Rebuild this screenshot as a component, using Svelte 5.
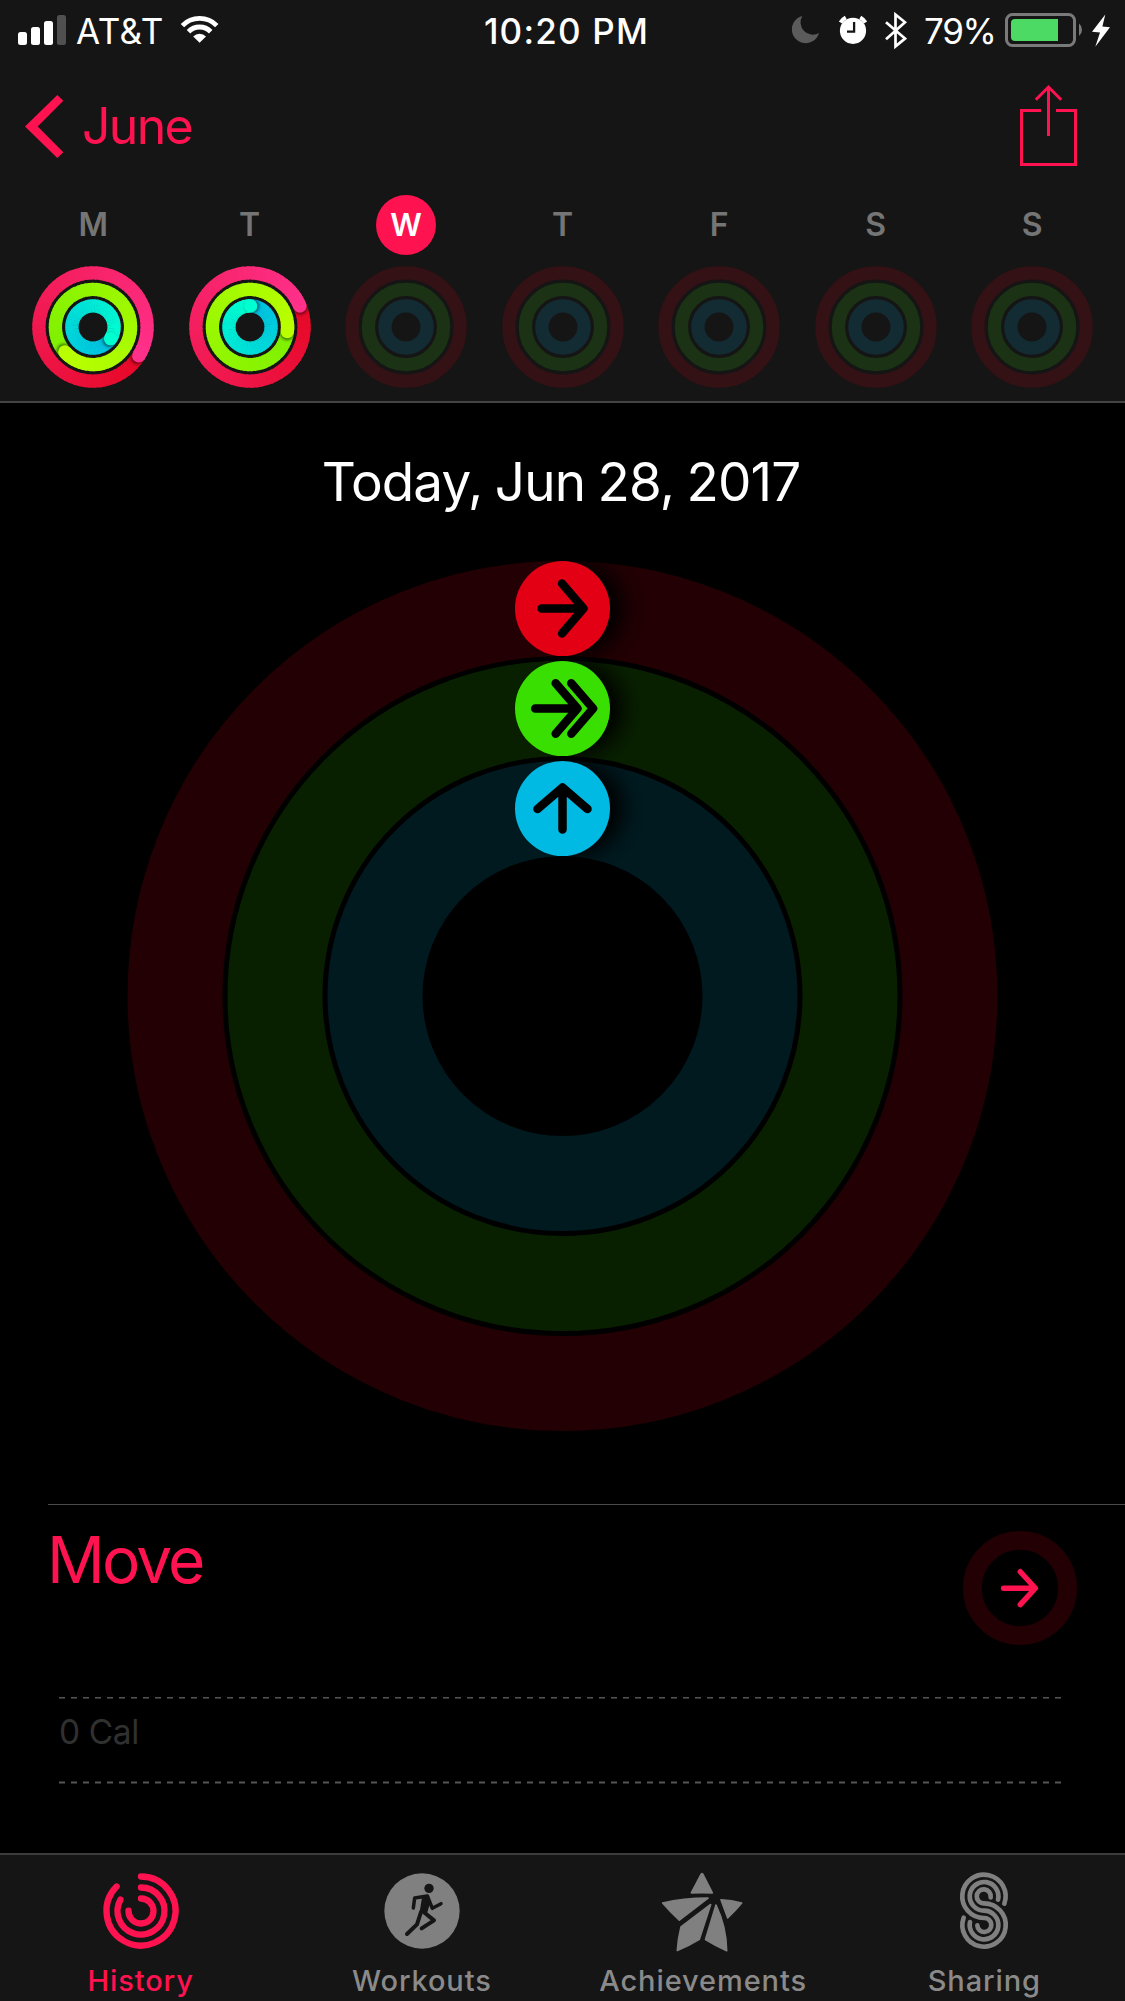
<script>
	const ringColors = [
		{r: 54.1, from: [230, 8, 38], to: [255, 48, 138]},
		{r: 37.6, from: [125, 240, 0], to: [186, 255, 0]},
		{r: 21.1, from: [0, 190, 226], to: [0, 255, 208]}
	]

	// ends: angle in degrees, clockwise from 12 o'clock, where each ring stops
	const days = [
		{letter: 'M', ends: [122.3, 228.6, 123.7]},
		{letter: 'T', ends: [67.3, 97, 2]},
		{letter: 'W', today: true},
		{letter: 'T'},
		{letter: 'F'},
		{letter: 'S'},
		{letter: 'S'}
	]

	const tabs = ['History', 'Workouts', 'Achievements', 'Sharing']

	const STEPS = 72

	function point(r, deg) {
		const a = (deg - 90) * Math.PI / 180
		return [r * Math.cos(a), r * Math.sin(a)]
	}

	function arc(r, a, b) {
		const [x1, y1] = point(r, a)
		const [x2, y2] = point(r, b)
		return `M${x1} ${y1}A${r} ${r} 0 ${b - a > 180 ? 1 : 0} 1 ${x2} ${y2}`
	}

	// svg has no conic gradient, so a full ring is many short arcs
	function segments(ring, end) {
		return Array.from({length: STEPS}, (_, i) => {
			const t = i / (STEPS - 1)
			const c = ring.from.map((v, k) => Math.round(v + (ring.to[k] - v) * t))
			const a = end + i * 360 / STEPS
			const last = i === STEPS - 1
			return {d: arc(ring.r, a, a + 360 / STEPS + (last ? 0 : 1.5)), color: `rgb(${c})`}
		})
	}

	function donut(r, w) {
		const o = r + w / 2
		const i = r - w / 2
		return `M${-o} 0a${o} ${o} 0 1 0 ${2 * o} 0a${o} ${o} 0 1 0 ${-2 * o} 0M${-i} 0a${i} ${i} 0 1 0 ${2 * i} 0a${i} ${i} 0 1 0 ${-2 * i} 0`
	}

	const bigRings = [
		{r: 387.5, track: '#220003', dot: '#e30014', icon: 'M-21 0H21M-.5 -25L21 0L-.5 25'},
		{r: 287.5, track: '#082000', dot: '#38df00', icon: 'M-27.3 0H15M-6.8 -25.2L15 0L-6.8 25.2M8.8 -25.2L30.6 0L8.8 25.2'},
		{r: 187.5, track: '#001a20', dot: '#00bae3', icon: 'M0 21V-21M-25 .5L0 -21L25 .5'}
	]
</script>

<div class="screen">
	<header>
		<div class="status">
			<div class="left">
				<svg width="48" height="63" viewBox="18 0 48 63" fill="#fff">
					<rect x="18" y="32" width="9" height="13" rx="2.5" />
					<rect x="31" y="27" width="9" height="18" rx="2.5" />
					<rect x="44" y="21" width="9" height="24" rx="2.5" />
					<rect x="57" y="15" width="9" height="30" rx="2.5" fill="#505050" />
				</svg>
				<span class="carrier">AT&amp;T</span>
				<svg width="40" height="63" viewBox="180 0 40 63" fill="none" stroke="#fff">
					<path d="M182.4 25.6A24.3 24.3 0 0 1 216.8 25.6" stroke-width="4.8" />
					<path d="M188.5 31.7A15.7 15.7 0 0 1 210.7 31.7" stroke-width="5" />
					<path d="M199.6 42.8L193.2 36.4A9.1 9.1 0 0 1 206 36.4Z" fill="#fff" stroke="none" />
				</svg>
			</div>
			<span class="time">10:20 PM</span>
			<div class="right">
				<svg width="28" height="63" viewBox="791 0 28 63">
					<path d="M802.3 16A13.8 13.8 0 1 0 819 33A12.3 12.3 0 0 1 802.3 16Z" fill="#5b5b5b" />
				</svg>
				<svg class="alarm" width="30" height="63" viewBox="838 0 30 63">
					<circle cx="853" cy="30.8" r="13.1" fill="#fff" />
					<path d="M840.5 22.5A16 16 0 0 1 845.8 17.6M865.5 22.5A16 16 0 0 0 860.2 17.6" stroke="#fff" stroke-width="4" fill="none" />
					<path d="M854.1 22V31.6H847" stroke="#151515" stroke-width="2.3" fill="none" />
				</svg>
				<svg class="bt" width="22" height="63" viewBox="885 0 22 63">
					<path d="M886 22.3L905 38.6L895.5 46.3V14.5L905 22.3L886 39.3" fill="none" stroke="#fff" stroke-width="2.7" />
				</svg>
				<span class="percent">79%</span>
				<svg width="80" height="63" viewBox="1004 0 80 63">
					<rect x="1006.5" y="14.5" width="68" height="31" rx="6" fill="none" stroke="#7a7a7a" stroke-width="3" />
					<path d="M1015 19H1058V41H1015a4 4 0 0 1 -4 -4V23a4 4 0 0 1 4 -4Z" fill="#4cd964" />
					<path d="M1079 23.5a8 8 0 0 1 0 12.5Z" fill="#7a7a7a" />
				</svg>
				<svg class="bolt" width="20" height="63" viewBox="1091 0 20 63">
					<path d="M1105.3 14.5L1092 31.7L1100 32.5L1095.3 46.8L1110 27.3L1102.4 26.6Z" fill="#fff" />
				</svg>
			</div>
		</div>

		<nav>
			<div class="back">
				<svg width="40" height="126" viewBox="24 63 40 126">
					<path d="M57.3 95L63.3 100.7L37.7 126.6L63.3 152.3L57.3 158L25 126.6Z" fill="#ff1250" />
				</svg>
				<span>June</span>
			</div>
			<svg width="58" height="126" viewBox="1020 63 58 126" fill="none" stroke="#ff1250" stroke-width="3">
				<path d="M1041 110.5H1021.5V164.5H1075.5V110.5H1056" />
				<path d="M1048.5 136V87.5M1035.8 99.7L1048.5 87L1061.2 99.7" />
			</svg>
		</nav>

		<div class="week">
			{#each days as day}
				<div class="day">
					<span class="letter" class:today={day.today}>{day.letter}</span>
					<svg width="122" height="122" viewBox="-61 -61 122 122" fill="none" stroke-width="13.3">
						{#if day.ends}
							{#each ringColors as ring, i}
								{@const end = day.ends[i]}
								{@const tip = point(ring.r, end)}
								{@const shade = point(ring.r, end + 90 / ring.r)}
								{#each segments(ring, end) as s}
									<path d={s.d} stroke={s.color} />
								{/each}
								<g clip-path="url(#small{i})">
									<circle cx={shade[0]} cy={shade[1]} r="7" fill="#000" opacity=".5" filter="url(#soft)" />
								</g>
								<path d={arc(ring.r, end - 12, end)} stroke="rgb({ring.to})" />
								<circle cx={tip[0]} cy={tip[1]} r="6.65" fill="rgb({ring.to})" />
							{/each}
						{:else}
							<circle r="54.1" stroke="#331114" />
							<circle r="37.6" stroke="#1b3314" />
							<circle r="21.1" stroke="#132c33" />
						{/if}
					</svg>
				</div>
			{/each}
		</div>
	</header>

	<main>
		<h1>Today, Jun 28, 2017</h1>
		<svg width="1125" height="870" viewBox="-562.5 -435 1125 870">
			<defs>
				<filter id="soft" x="-50%" y="-50%" width="200%" height="200%"><feGaussianBlur stdDeviation="1.5" /></filter>
				<filter id="softBig" x="-60%" y="-60%" width="220%" height="220%"><feGaussianBlur stdDeviation="11" /></filter>
				{#each ringColors as ring, i}
					<clipPath id="small{i}"><path d={donut(ring.r, 13.3)} clip-rule="evenodd" /></clipPath>
				{/each}
			</defs>
			{#each bigRings as ring, i}
				<clipPath id="big{i}"><path d={donut(ring.r, 95)} clip-rule="evenodd" /></clipPath>
				<circle r={ring.r} fill="none" stroke={ring.track} stroke-width="95" />
				<g clip-path="url(#big{i})">
					<circle cx="15" cy={-ring.r} r="46" filter="url(#softBig)" />
					<path d={arc(ring.r, -20, 0)} fill="none" stroke={ring.track} stroke-width="96" />
				</g>
				<g transform="translate(0 {-ring.r})">
					<circle r="47.5" fill={ring.dot} />
					<path d={ring.icon} fill="none" stroke="#000" stroke-width="8.5" stroke-linecap="round" stroke-linejoin="round" />
				</g>
			{/each}
		</svg>

		<section>
			<div class="heading">
				<h2>Move</h2>
				<svg width="114" height="114" viewBox="-57 -57 114 114" fill="none">
					<circle r="47.6" stroke="#220003" stroke-width="18.8" />
					<path d="M-16.4 .2H15.2M.3 -16.3L15.4 .2L.3 16.6" stroke="#ff1250" stroke-width="5.4" stroke-linecap="round" stroke-linejoin="round" />
				</svg>
			</div>
			<div class="chart">
				<svg width="1002" height="3"><path d="M0 .8H1002" stroke="#555" stroke-width="1.6" stroke-dasharray="6 6" /></svg>
				<p>0 Cal</p>
				<svg width="1002" height="3"><path d="M0 1.5H1002" stroke="#555" stroke-width="2" stroke-dasharray="6 6" /></svg>
			</div>
		</section>
	</main>

	<footer>
		{#each tabs as tab, i}
			<div class="tab" class:active={i === 0}>
				{#if tab === 'History'}
					<svg width="84" height="84" viewBox="-126 -126 252 252" fill="none" stroke="currentColor" stroke-width="19" stroke-linecap="round">
						<path d={arc(103.5, 0, 315)} />
						<path d={arc(70.5, 0, 299)} />
						<path d={arc(37.5, 0, 272)} />
					</svg>
				{:else if tab === 'Workouts'}
					<svg width="84" height="84" viewBox="150 87 252 252" fill="none" stroke="#151515" stroke-linecap="round" stroke-linejoin="round">
						<circle cx="276" cy="213" r="113" fill="#808080" stroke="none" />
						<circle cx="297" cy="145" r="14" fill="#151515" stroke="none" />
						<path d="M279 178L293 168L297 186L288 216L273 216Z" fill="#151515" stroke-width="8" />
						<path d="M250 204L254 174L292 168L307 205L333 191" stroke-width="10.5" />
						<path d="M281 216L312 241L275 265" stroke-width="12" />
						<path d="M273 216L261 253L231 282" stroke-width="12" />
					</svg>
				{:else if tab === 'Achievements'}
					<svg width="84" height="84" viewBox="243 87 252 252" fill="#808080" stroke="#808080" stroke-width="5" stroke-linejoin="round">
						<path d="M364 102Q366 100 368 102L397 158.5Q366 157 334 158.5Z" />
						<path d="M248 189Q310 174 384 174L298 240.5Q272 217 248 189Z" />
						<path d="M392 193.5L303 260.5Q294 296 292 331.5Q326 318 358 298Z" />
						<path d="M408 195L376.5 298.5Q408 318 440 332Q439 260 408 195Z" />
						<path d="M423 179.5Q455 181 485 189Q466 212 443 233.5Z" />
					</svg>
				{:else}
					<svg width="84" height="84" viewBox="126 87 252 252" fill="none" stroke="#808080" stroke-width="14" stroke-linecap="round">
						<path d="M313 191A65 65 0 1 0 252 234A21 21 0 1 1 232 256" />
						<path d="M294 179A43 43 0 1 0 252 212A43 43 0 1 1 210 246" />
						<path d="M272 172A21 21 0 1 0 252 190A65 65 0 1 1 191 233" />
					</svg>
				{/if}
				<span>{tab}</span>
			</div>
		{/each}
	</footer>
</div>

<style>
	:global(body) {
		margin: 0;
		background: #000;
	}
	svg {
		display: block;
		flex: none;
	}
	.screen {
		width: 1125px;
		height: 2001px;
		overflow: hidden;
		display: flex;
		flex-direction: column;
		background: #000;
		color: #fff;
		font-family: Inter, "Liberation Sans", sans-serif;
		white-space: nowrap;
	}
	header {
		box-sizing: border-box;
		height: 403px;
		background: #151515;
		border-bottom: 2px solid #444;
	}
	.status {
		height: 63px;
		display: grid;
		grid-template-columns: 1fr auto 1fr;
		align-items: center;
		font-size: 35px;
		line-height: 63px;
	}
	.left, .right {
		display: flex;
	}
	.left {
		padding-left: 18px;
	}
	.carrier {
		width: 104px;
		margin-left: 10px;
		letter-spacing: 0.5px;
	}
	.time {
		padding-left: 8px;
		font-weight: 500;
		letter-spacing: 1.2px;
	}
	.right {
		justify-content: flex-end;
		padding-right: 14px;
	}
	.alarm {
		margin-left: 19px;
	}
	.bt {
		margin: 0 17px 0 17px;
	}
	.percent {
		width: 80px;
		letter-spacing: -1.3px;
	}
	.bolt {
		margin-left: 7px;
	}
	nav {
		height: 126px;
		display: flex;
		justify-content: space-between;
		padding: 0 47px 0 24px;
		color: #ff1250;
		font-size: 50px;
		line-height: 127px;
		letter-spacing: -1.7px;
	}
	.back {
		display: flex;
		gap: 18px;
	}
	.week {
		display: grid;
		grid-template-columns: repeat(7, 156.5px);
		padding: 6px 0 0 14.9px;
	}
	.day {
		display: flex;
		flex-direction: column;
		align-items: center;
		gap: 11px;
	}
	.letter {
		width: 60px;
		height: 60px;
		border-radius: 50%;
		text-align: center;
		font-size: 32px;
		font-weight: 600;
		line-height: 59px;
		color: #757575;
	}
	.today {
		background: #ff1250;
		color: #fff;
		font-size: 31px;
	}
	main {
		flex: 1;
	}
	h1 {
		margin: 47px 0;
		padding-right: 3px;
		font-size: 53px;
		font-weight: 400;
		line-height: 64px;
		letter-spacing: -0.9px;
		word-spacing: -1.5px;
		text-align: center;
	}
	section {
		margin: 73px 0 0 48px;
		border-top: 1px solid #4a4a4a;
	}
	.heading {
		display: flex;
		justify-content: space-between;
		padding: 18px 48px 0 0;
	}
	.heading svg {
		margin-top: 8px;
	}
	h2 {
		margin: 0 0 0 -1px;
		color: #ff1250;
		font-size: 64px;
		font-weight: 400;
		line-height: 74px;
		letter-spacing: -2.9px;
	}
	.chart {
		padding: 52px 0 0 11px;
	}
	.chart p {
		margin: 0;
		height: 81px;
		font-size: 33.5px;
		line-height: 65px;
		letter-spacing: -0.4px;
		color: #303030;
	}
	footer {
		box-sizing: border-box;
		height: 148px;
		display: grid;
		grid-template-columns: repeat(4, 1fr);
		background: #151515;
		border-top: 2px solid #3c3c3c;
	}
	.tab {
		display: flex;
		flex-direction: column;
		align-items: center;
		padding-top: 14px;
		color: #8a8a8a;
		font-size: 29px;
		font-weight: 500;
		line-height: 56px;
		letter-spacing: 0.9px;
	}
	.active {
		color: #ff1250;
	}
</style>
